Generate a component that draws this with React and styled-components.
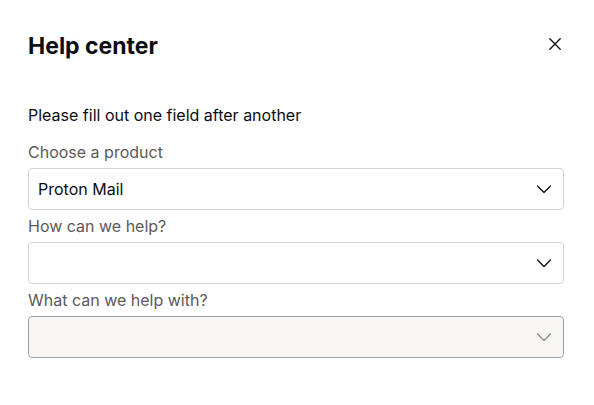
import { Fragment } from "react";
import styled, { createGlobalStyle } from "styled-components";

const Global = createGlobalStyle`
  body {
    margin: 0;
    background: #ffffff;
    font-family: Inter, "Noto Sans", sans-serif;
    color: #0c0c14;
  }
`;

const Modal = styled.div`
  width: 594px;
  height: 405px;
  box-sizing: border-box;
  padding: 32px 30px 0 28px;
  background: #ffffff;
`;

const Header = styled.div`
  display: flex;
  justify-content: space-between;
  align-items: center;
  height: 28px;
`;

const Title = styled.h1`
  margin: 0;
  font-size: 23px;
  line-height: 28px;
  font-weight: 700;
  color: #0c0c14;
`;

const CloseButton = styled.button`
  display: flex;
  align-items: center;
  justify-content: center;
  width: 20px;
  height: 20px;
  margin-right: -1px;
  margin-top: -4px;
  padding: 0;
  border: none;
  background: none;
  color: #0c0c14;
  cursor: pointer;
`;

const Intro = styled.p`
  margin: 45px 0 17px;
  font-size: 16px;
  line-height: 20px;
  color: #0c0c14;
`;

const Form = styled.div`
  display: flex;
  flex-direction: column;
  gap: 6px;
`;

const Label = styled.label`
  font-size: 16px;
  line-height: 20px;
  color: #5c5958;
`;

const Select = styled.div`
  display: flex;
  align-items: center;
  justify-content: space-between;
  height: 42px;
  box-sizing: border-box;
  padding: 0 11px 0 9px;
  border: 1px solid ${(p) => (p.disabled ? "#9aa1ad" : "#d6d3d1")};
  border-radius: 4px;
  background: ${(p) => (p.disabled ? "#f7f6f4" : "#ffffff")};
  font-size: 16px;
  color: #0c0c14;
`;

const Chevron = ({ muted }) => (
  <svg width="16" height="16" viewBox="0 0 16 16" fill="none">
    <path
      d="M1.5 5 L8 11.5 L14.5 5"
      stroke={muted ? "#8a8a8a" : "#0c0c14"}
      strokeWidth="1.3"
      strokeLinecap="round"
      strokeLinejoin="round"
    />
  </svg>
);

const fields = [
  { label: "Choose a product", value: "Proton Mail" },
  { label: "How can we help?", value: "" },
  { label: "What can we help with?", value: "", disabled: true },
];

export default function App() {
  return (
    <>
      <Global />
      <Modal>
        <Header>
          <Title>Help center</Title>
          <CloseButton aria-label="Close">
            <svg width="12" height="12" viewBox="0 0 12 12" fill="none">
              <path
                d="M0.8 0.8 L11.2 11.2 M11.2 0.8 L0.8 11.2"
                stroke="#0c0c14"
                strokeWidth="1.3"
                strokeLinecap="round"
              />
            </svg>
          </CloseButton>
        </Header>
        <Intro>Please fill out one field after another</Intro>
        <Form>
          {fields.map((f) => (
            <Fragment key={f.label}>
              <Label>{f.label}</Label>
              <Select disabled={f.disabled}>
                <span>{f.value}</span>
                <Chevron muted={f.disabled} />
              </Select>
            </Fragment>
          ))}
        </Form>
      </Modal>
    </>
  );
}
